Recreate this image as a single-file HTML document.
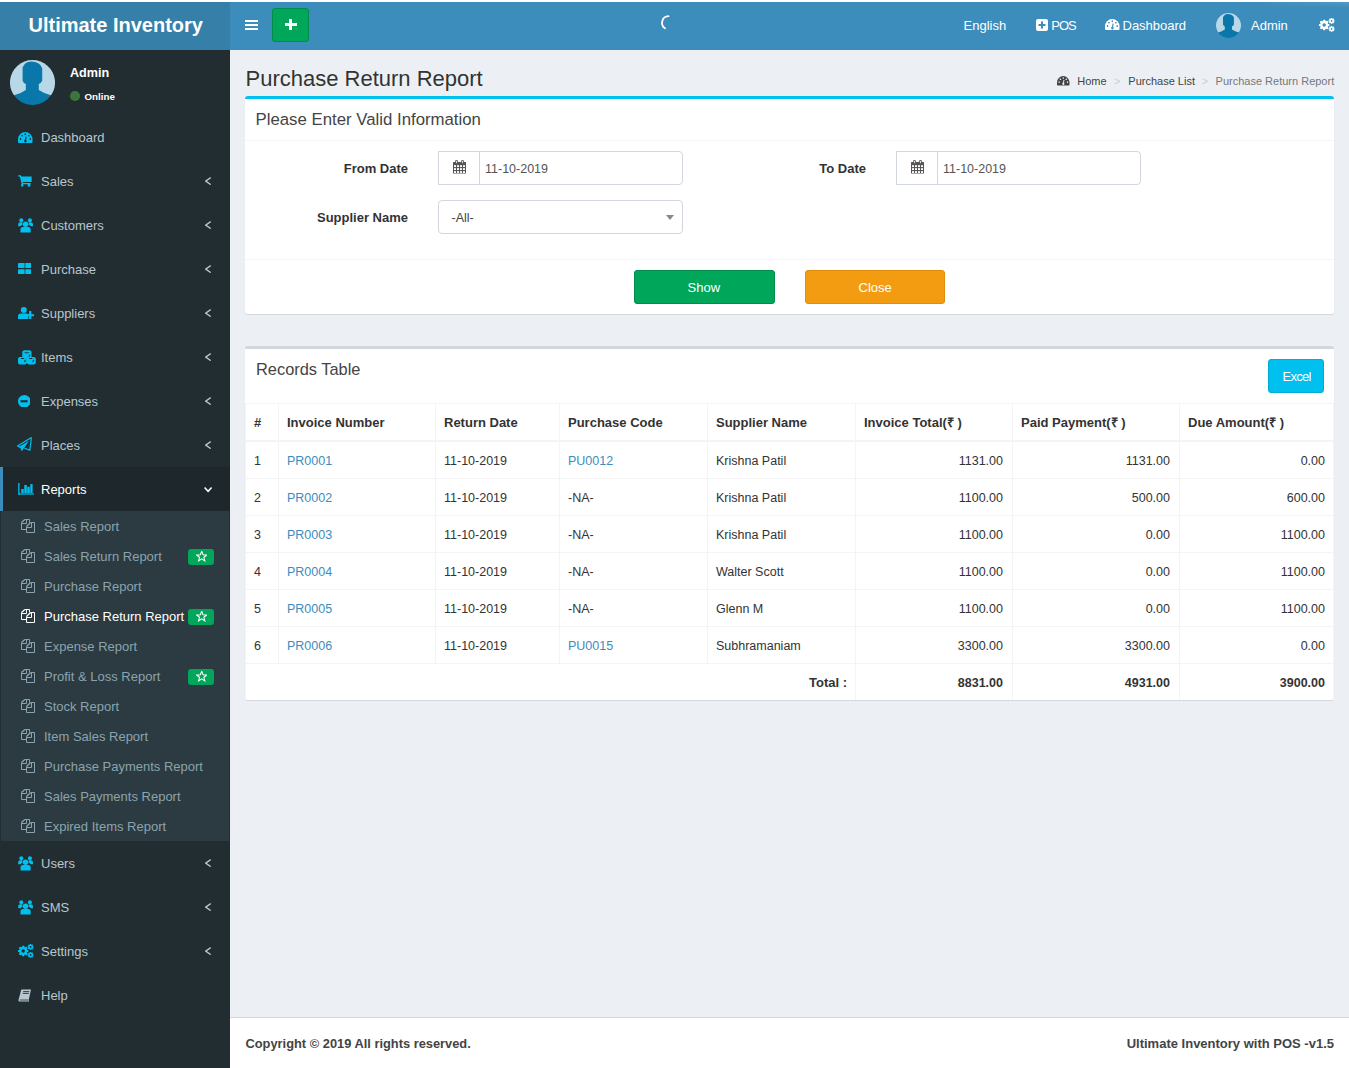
<!DOCTYPE html><html><head><meta charset="utf-8"><style>*{box-sizing:border-box;margin:0;padding:0}
html,body{width:1349px;height:1068px;overflow:hidden;background:#fff;font-family:"Liberation Sans",sans-serif;font-size:13px;color:#333}
.abs{position:absolute}
.t{position:absolute;white-space:nowrap}
.box{position:absolute;background:#fff;border-radius:3px;box-shadow:0 1px 1px rgba(0,0,0,.1)}
</style></head><body>
<div class="abs" style="left:0;top:0;width:1349px;height:2px;background:#fff"></div>
<div class="abs" style="left:0;top:2px;width:230px;height:48px;background:#367fa9"></div>
<div class="abs" style="left:230px;top:2px;width:1119px;height:48px;background:#3c8dbc"></div>
<div class="abs" style="left:1250px;top:2px;width:99px;height:6px;background:linear-gradient(rgba(255,255,255,.12),rgba(255,255,255,0));-webkit-mask-image:linear-gradient(90deg,transparent,#000)"></div>
<span class="t" style="left:28.5px;top:11.07px;font-size:20px;line-height:28px;color:#fff;font-weight:bold;">Ultimate Inventory</span>
<div class="abs" style="left:245px;top:20px;width:13px;height:2px;background:#fff"></div>
<div class="abs" style="left:245px;top:24px;width:13px;height:2px;background:#fff"></div>
<div class="abs" style="left:245px;top:28px;width:13px;height:2px;background:#fff"></div>
<div class="abs" style="left:272px;top:8px;width:37px;height:34px;background:#00a65a;border:1px solid #008d4c;border-radius:3px"></div>
<div class="abs" style="left:285px;top:23px;width:11.6px;height:3px;background:#fff"></div>
<div class="abs" style="left:289.2px;top:19px;width:3.3px;height:11px;background:#fff"></div>
<svg class="abs" style="left:657.3px;top:12.8px" width="20" height="20" viewBox="0 0 20 20"><path d="M11.5 3.2 A6.6 6.6 0 0 0 8 15.3" fill="none" stroke="#fff" stroke-width="1.8" stroke-linecap="round"/></svg>
<span class="t" style="left:963.5px;top:16.50px;font-size:13px;line-height:18px;color:#fff;">English</span>
<svg class="abs" style="left:1036px;top:19px" width="12" height="12" viewBox="0 0 12 12"><rect x="0" y="0" width="12" height="12" rx="2" fill="#fff"/><rect x="2.5" y="5" width="7" height="2" fill="#3c8dbc"/><rect x="5" y="2.5" width="2" height="7" fill="#3c8dbc"/></svg>
<span class="t" style="left:1051.3px;top:16.50px;font-size:13px;line-height:18px;color:#fff;letter-spacing:-1px">POS</span>
<svg class="abs" style="left:1105px;top:18.5px" width="14.5" height="11" viewBox="0 0 14.5 11"><path d="M0.5 11 Q0 10.8 0 9.6 L0 7.3 A7.25 7.25 0 0 1 14.5 7.3 L14.5 9.6 Q14.5 10.8 14 11 Z" fill="#fff"/><ellipse cx="7.3" cy="2.3" rx="0.8" ry="1" fill="#3c8dbc"/><ellipse cx="4" cy="3.7" rx="1" ry="0.8" fill="#3c8dbc"/><ellipse cx="10.8" cy="3.7" rx="1" ry="0.8" fill="#3c8dbc"/><ellipse cx="2.5" cy="7" rx="0.8" ry="1" fill="#3c8dbc"/><ellipse cx="12.2" cy="7" rx="0.8" ry="1" fill="#3c8dbc"/><path d="M7.4 8.6 L8.1 4.6" stroke="#3c8dbc" stroke-width="1.1"/><ellipse cx="7.4" cy="8.9" rx="1.2" ry="1.5" fill="#3c8dbc"/></svg>
<span class="t" style="left:1122.5px;top:16.50px;font-size:13px;line-height:18px;color:#fff;">Dashboard</span>
<svg class="abs" style="left:1216px;top:13px" width="25" height="25" viewBox="0 0 25 25"><path d="M2.21 19.6 A12.5 12.5 0 1 1 22.79 19.6 Z" fill="#b8d8e8"/><path fill="#0a77ab" d="M2.21 19.6 Q6 18.6 8.8 16.6 L8.8 13.4 Q7.6 13 7 11.5 L7 4.2 Q8.3 1 11.6 0.9 Q16.6 0.9 17.9 4.6 L17.9 11.5 Q17.2 13 16 13.4 L16 16.6 Q19 18.6 22.79 19.6 A12.5 12.5 0 0 1 2.21 19.6 Z"/></svg>
<span class="t" style="left:1251px;top:16.50px;font-size:13px;line-height:18px;color:#fff;">Admin</span>
<svg class="abs" style="left:1319px;top:18px" width="16" height="14" viewBox="0 0 16 14"><g fill="#fff"><circle cx="5.2" cy="7" r="3.9"/><rect x="4.1" y="1.8" width="2.2" height="10.4" rx=".4" transform="rotate(0 5.2 7)"/><rect x="4.1" y="1.8" width="2.2" height="10.4" rx=".4" transform="rotate(45 5.2 7)"/><rect x="4.1" y="1.8" width="2.2" height="10.4" rx=".4" transform="rotate(90 5.2 7)"/><rect x="4.1" y="1.8" width="2.2" height="10.4" rx=".4" transform="rotate(135 5.2 7)"/><circle cx="12.6" cy="2.9" r="2.2"/><rect x="11.9" y="-0.050000000000000266" width="1.4" height="5.9" transform="rotate(0 12.6 2.9)"/><rect x="11.9" y="-0.050000000000000266" width="1.4" height="5.9" transform="rotate(45 12.6 2.9)"/><rect x="11.9" y="-0.050000000000000266" width="1.4" height="5.9" transform="rotate(90 12.6 2.9)"/><rect x="11.9" y="-0.050000000000000266" width="1.4" height="5.9" transform="rotate(135 12.6 2.9)"/><circle cx="12.6" cy="10.9" r="2.2"/><rect x="11.9" y="7.95" width="1.4" height="5.9" transform="rotate(0 12.6 10.9)"/><rect x="11.9" y="7.95" width="1.4" height="5.9" transform="rotate(45 12.6 10.9)"/><rect x="11.9" y="7.95" width="1.4" height="5.9" transform="rotate(90 12.6 10.9)"/><rect x="11.9" y="7.95" width="1.4" height="5.9" transform="rotate(135 12.6 10.9)"/></g><circle cx="5.2" cy="7" r="1.7" fill="#3c8dbc"/><circle cx="12.6" cy="2.9" r="0.9" fill="#3c8dbc"/><circle cx="12.6" cy="10.9" r="0.9" fill="#3c8dbc"/></svg>
<div class="abs" style="left:0;top:50px;width:230px;height:1018px;background:#222d32"></div>
<svg class="abs" style="left:10px;top:60px" width="45" height="45" viewBox="0 0 25 25"><path d="M2.21 19.6 A12.5 12.5 0 1 1 22.79 19.6 Z" fill="#b8d8e8"/><path fill="#0a77ab" d="M2.21 19.6 Q6 18.6 8.8 16.6 L8.8 13.4 Q7.6 13 7 11.5 L7 4.2 Q8.3 1 11.6 0.9 Q16.6 0.9 17.9 4.6 L17.9 11.5 Q17.2 13 16 13.4 L16 16.6 Q19 18.6 22.79 19.6 A12.5 12.5 0 0 1 2.21 19.6 Z"/></svg>
<span class="t" style="left:70px;top:63.63px;font-size:12.6px;line-height:18px;color:#fff;font-weight:bold;">Admin</span>
<div class="abs" style="left:70px;top:91.2px;width:9.5px;height:9.5px;border-radius:50%;background:#3c763d"></div>
<span class="t" style="left:84.5px;top:89.62px;font-size:9.75px;line-height:14px;color:#fff;font-weight:bold;">Online</span>
<span class="t" style="left:41px;top:128.70px;font-size:13px;line-height:18px;color:#b8c7ce;">Dashboard</span>
<svg class="abs" style="left:18px;top:132px" width="14.5" height="11" viewBox="0 0 14.5 11"><path d="M0.5 11 Q0 10.8 0 9.6 L0 7.3 A7.25 7.25 0 0 1 14.5 7.3 L14.5 9.6 Q14.5 10.8 14 11 Z" fill="#00c0ef"/><ellipse cx="7.3" cy="2.3" rx="0.8" ry="1" fill="#222d32"/><ellipse cx="4" cy="3.7" rx="1" ry="0.8" fill="#222d32"/><ellipse cx="10.8" cy="3.7" rx="1" ry="0.8" fill="#222d32"/><ellipse cx="2.5" cy="7" rx="0.8" ry="1" fill="#222d32"/><ellipse cx="12.2" cy="7" rx="0.8" ry="1" fill="#222d32"/><path d="M7.4 8.6 L8.1 4.6" stroke="#222d32" stroke-width="1.1"/><ellipse cx="7.4" cy="8.9" rx="1.2" ry="1.5" fill="#222d32"/></svg>
<span class="t" style="left:41px;top:172.70px;font-size:13px;line-height:18px;color:#b8c7ce;">Sales</span>
<svg class="abs" style="left:204.5px;top:177px" width="6.5" height="8.2" viewBox="0 0 6.5 8.2"><path d="M5.8 0.6 L0.7 4.1 L5.8 7.6" fill="none" stroke="#b8c7ce" stroke-width="1.4"/></svg>
<svg class="abs" style="left:17.5px;top:175.3px" width="14" height="12" viewBox="0 0 14 12"><path d="M0.2 0.9 H2.4 L4.3 8.6 H12.8" fill="none" stroke="#00c0ef" stroke-width="1.4"/><path d="M2.7 1.6 H13.6 V6.9 H3.9 Z" fill="#00c0ef"/><rect x="3.2" y="9" width="2" height="2.6" fill="#00c0ef"/><rect x="9.8" y="9" width="2.5" height="2.6" fill="#00c0ef"/></svg>
<span class="t" style="left:41px;top:216.70px;font-size:13px;line-height:18px;color:#b8c7ce;">Customers</span>
<svg class="abs" style="left:204.5px;top:221px" width="6.5" height="8.2" viewBox="0 0 6.5 8.2"><path d="M5.8 0.6 L0.7 4.1 L5.8 7.6" fill="none" stroke="#b8c7ce" stroke-width="1.4"/></svg>
<svg class="abs" style="left:17.5px;top:217.5px" width="15.2" height="15" viewBox="0 0 15.2 15"><g fill="#00c0ef"><circle cx="7.6" cy="6.3" r="2.8"/><path d="M2.5 14.5 V11.6 Q2.5 9 5 9 H10.2 Q12.7 9 12.7 11.6 V14.5 Z"/><circle cx="3.3" cy="2.2" r="2"/><circle cx="11.9" cy="2.2" r="2"/><path d="M0.2 8.2 V6.2 Q0.2 4.2 2.2 4.2 H4.4 Q4.1 5.2 4.6 6.5 Q3 7.2 2.6 8.2 Z"/><path d="M15 8.2 V6.2 Q15 4.2 13 4.2 H10.8 Q11.1 5.2 10.6 6.5 Q12.2 7.2 12.6 8.2 Z"/></g></svg>
<span class="t" style="left:41px;top:260.70px;font-size:13px;line-height:18px;color:#b8c7ce;">Purchase</span>
<svg class="abs" style="left:204.5px;top:265px" width="6.5" height="8.2" viewBox="0 0 6.5 8.2"><path d="M5.8 0.6 L0.7 4.1 L5.8 7.6" fill="none" stroke="#b8c7ce" stroke-width="1.4"/></svg>
<svg class="abs" style="left:17.6px;top:262.8px" width="13.7" height="11.5" viewBox="0 0 13.7 11.5"><g fill="#00c0ef"><rect x="0" y="0" width="6.6" height="5.1" rx=".4"/><rect x="7.3" y="0" width="6.4" height="5.1" rx=".4"/><rect x="0" y="6.2" width="6.6" height="5.2" rx=".4"/><rect x="7.3" y="6.2" width="6.4" height="5.2" rx=".4"/></g></svg>
<span class="t" style="left:41px;top:304.70px;font-size:13px;line-height:18px;color:#b8c7ce;">Suppliers</span>
<svg class="abs" style="left:204.5px;top:309px" width="6.5" height="8.2" viewBox="0 0 6.5 8.2"><path d="M5.8 0.6 L0.7 4.1 L5.8 7.6" fill="none" stroke="#b8c7ce" stroke-width="1.4"/></svg>
<svg class="abs" style="left:17.5px;top:307px" width="16.5" height="12" viewBox="0 0 16.5 12"><g fill="#00c0ef"><circle cx="5.8" cy="3" r="3"/><path d="M0 12 V9.5 Q0 6.5 3 6.5 H8.5 Q9.6 6.5 10.4 7 V12 Z"/><rect x="7.8" y="7.2" width="8.7" height="2"/><rect x="11.1" y="4" width="2.2" height="8"/></g></svg>
<span class="t" style="left:41px;top:348.70px;font-size:13px;line-height:18px;color:#b8c7ce;">Items</span>
<svg class="abs" style="left:204.5px;top:353px" width="6.5" height="8.2" viewBox="0 0 6.5 8.2"><path d="M5.8 0.6 L0.7 4.1 L5.8 7.6" fill="none" stroke="#b8c7ce" stroke-width="1.4"/></svg>
<svg class="abs" style="left:17.5px;top:350px" width="18" height="15" viewBox="0 0 18 15"><g fill="#00c0ef"><path d="M4.3 1.4 L5.9 0.3 H11.9 L13.5 1.4 V7.4 L11.9 8.4 H5.9 L4.3 7.4 Z"/><path d="M0 8.2 L1.6 7 H7.3 L8.9 8.2 V13.3 L7.3 14.6 H1.6 L0 13.3 Z"/><path d="M8.9 8.2 L10.5 7 H16.2 L17.8 8.2 V13.3 L16.2 14.6 H10.5 L8.9 13.3 Z"/></g><g fill="#222d32"><path d="M5.7 2.8 Q8.9 1.8 12 2.8 Q8.9 3.8 5.7 2.8 Z"/><path d="M2.6 7.9 H6.5 L5.7 9.1 H3.4 Z"/><path d="M10.9 7.9 H14.8 L14 9.1 H11.7 Z"/></g><g stroke="#222d32" stroke-width="1.1" stroke-linecap="round"><path d="M11.9 5.1 L11.1 6.3"/><path d="M7.3 10.3 L6.6 11.7"/><path d="M15.6 10.3 L14.9 11.7"/></g></svg>
<span class="t" style="left:41px;top:392.70px;font-size:13px;line-height:18px;color:#b8c7ce;">Expenses</span>
<svg class="abs" style="left:204.5px;top:397px" width="6.5" height="8.2" viewBox="0 0 6.5 8.2"><path d="M5.8 0.6 L0.7 4.1 L5.8 7.6" fill="none" stroke="#b8c7ce" stroke-width="1.4"/></svg>
<svg class="abs" style="left:17.7px;top:394.9px" width="12.6" height="12.6" viewBox="0 0 12.6 12.6"><circle cx="6.3" cy="6.3" r="6.3" fill="#00c0ef"/><rect x="2.5" y="5.2" width="7.1" height="2.1" fill="#222d32"/></svg>
<span class="t" style="left:41px;top:436.70px;font-size:13px;line-height:18px;color:#b8c7ce;">Places</span>
<svg class="abs" style="left:204.5px;top:441px" width="6.5" height="8.2" viewBox="0 0 6.5 8.2"><path d="M5.8 0.6 L0.7 4.1 L5.8 7.6" fill="none" stroke="#b8c7ce" stroke-width="1.4"/></svg>
<svg class="abs" style="left:17.3px;top:437.4px" width="15" height="15" viewBox="0 0 15 15"><path d="M14.4 0.5 L0.5 9 L3.3 10.4 M14.4 0.5 L12.9 13.1 L7.4 11.3" fill="none" stroke="#00c0ef" stroke-width="1.2" stroke-linejoin="round"/><path d="M11.9 3.9 L2.6 9.6 L4.8 14.3 L7 11.1 Z" fill="#00c0ef"/></svg>
<div class="abs" style="left:0;top:467px;width:230px;height:44px;background:#1e282c"></div>
<div class="abs" style="left:0;top:467px;width:3px;height:44px;background:#3c8dbc"></div>
<span class="t" style="left:41px;top:480.70px;font-size:13px;line-height:18px;color:#fff;">Reports</span>
<svg class="abs" style="left:204px;top:487px" width="8.5" height="5.5" viewBox="0 0 8.5 5.5"><path d="M0.6 0.6 L4.1 4.3 L7.6 0.6" fill="none" stroke="#fff" stroke-width="1.5"/></svg>
<svg class="abs" style="left:17.5px;top:483px" width="16.5" height="11.7" viewBox="0 0 16.5 11.7"><g fill="#00c0ef"><rect x="0.2" y="0" width="1.3" height="11.6"/><rect x="0.2" y="10.4" width="16.3" height="1.2"/><rect x="3.3" y="6" width="2.4" height="4"/><rect x="6.3" y="2" width="2.5" height="8"/><rect x="9.3" y="3.8" width="2.4" height="6.2"/><rect x="12.3" y="1.1" width="2.3" height="8.9"/></g></svg>
<div class="abs" style="left:1px;top:511px;width:228px;height:330px;background:#2c3b41"></div>
<span class="t" style="left:44px;top:517.50px;font-size:13px;line-height:18px;color:#8aa4af;">Sales Report</span>
<svg class="abs" style="left:21px;top:519px" width="15" height="15" viewBox="0 0 15 15"><g fill="none" stroke="#8aa4af" stroke-width="1"><path d="M3.8 0.5 H8.5 V3.5 M5.5 10.5 H0.5 V3.5 M5.5 0.5 V4.5 H0.5"/><path d="M9.5 3.5 H13.5 V13.5 H5.5 V7.5 M10.5 3.5 V8.5 H5.5"/></g><path d="M0.5 3.6 L3.9 0.5 M5.5 7.6 L9.6 3.5" stroke="#8aa4af" stroke-width="1.35"/></svg>
<span class="t" style="left:44px;top:547.50px;font-size:13px;line-height:18px;color:#8aa4af;">Sales Return Report</span>
<svg class="abs" style="left:21px;top:549px" width="15" height="15" viewBox="0 0 15 15"><g fill="none" stroke="#8aa4af" stroke-width="1"><path d="M3.8 0.5 H8.5 V3.5 M5.5 10.5 H0.5 V3.5 M5.5 0.5 V4.5 H0.5"/><path d="M9.5 3.5 H13.5 V13.5 H5.5 V7.5 M10.5 3.5 V8.5 H5.5"/></g><path d="M0.5 3.6 L3.9 0.5 M5.5 7.6 L9.6 3.5" stroke="#8aa4af" stroke-width="1.35"/></svg>
<div class="abs" style="left:188px;top:549px;width:26px;height:16px;background:#00a65a;border-radius:3px"></div>
<svg class="abs" style="left:195.6px;top:551.1px" width="11.4" height="11" viewBox="0 0 11.4 11"><path d="M5.70 0.25 L7.05 3.74 L10.79 3.95 L7.89 6.31 L8.84 9.93 L5.70 7.90 L2.56 9.93 L3.51 6.31 L0.61 3.95 L4.35 3.74 Z" fill="none" stroke="#fff" stroke-width="1.05" stroke-linejoin="miter"/></svg>
<span class="t" style="left:44px;top:577.50px;font-size:13px;line-height:18px;color:#8aa4af;">Purchase Report</span>
<svg class="abs" style="left:21px;top:579px" width="15" height="15" viewBox="0 0 15 15"><g fill="none" stroke="#8aa4af" stroke-width="1"><path d="M3.8 0.5 H8.5 V3.5 M5.5 10.5 H0.5 V3.5 M5.5 0.5 V4.5 H0.5"/><path d="M9.5 3.5 H13.5 V13.5 H5.5 V7.5 M10.5 3.5 V8.5 H5.5"/></g><path d="M0.5 3.6 L3.9 0.5 M5.5 7.6 L9.6 3.5" stroke="#8aa4af" stroke-width="1.35"/></svg>
<span class="t" style="left:44px;top:607.50px;font-size:13px;line-height:18px;color:#fff;">Purchase Return Report</span>
<svg class="abs" style="left:21px;top:609px" width="15" height="15" viewBox="0 0 15 15"><g fill="none" stroke="#fff" stroke-width="1"><path d="M3.8 0.5 H8.5 V3.5 M5.5 10.5 H0.5 V3.5 M5.5 0.5 V4.5 H0.5"/><path d="M9.5 3.5 H13.5 V13.5 H5.5 V7.5 M10.5 3.5 V8.5 H5.5"/></g><path d="M0.5 3.6 L3.9 0.5 M5.5 7.6 L9.6 3.5" stroke="#fff" stroke-width="1.35"/></svg>
<div class="abs" style="left:188px;top:609px;width:26px;height:16px;background:#00a65a;border-radius:3px"></div>
<svg class="abs" style="left:195.6px;top:611.1px" width="11.4" height="11" viewBox="0 0 11.4 11"><path d="M5.70 0.25 L7.05 3.74 L10.79 3.95 L7.89 6.31 L8.84 9.93 L5.70 7.90 L2.56 9.93 L3.51 6.31 L0.61 3.95 L4.35 3.74 Z" fill="none" stroke="#fff" stroke-width="1.05" stroke-linejoin="miter"/></svg>
<span class="t" style="left:44px;top:637.50px;font-size:13px;line-height:18px;color:#8aa4af;">Expense Report</span>
<svg class="abs" style="left:21px;top:639px" width="15" height="15" viewBox="0 0 15 15"><g fill="none" stroke="#8aa4af" stroke-width="1"><path d="M3.8 0.5 H8.5 V3.5 M5.5 10.5 H0.5 V3.5 M5.5 0.5 V4.5 H0.5"/><path d="M9.5 3.5 H13.5 V13.5 H5.5 V7.5 M10.5 3.5 V8.5 H5.5"/></g><path d="M0.5 3.6 L3.9 0.5 M5.5 7.6 L9.6 3.5" stroke="#8aa4af" stroke-width="1.35"/></svg>
<span class="t" style="left:44px;top:667.50px;font-size:13px;line-height:18px;color:#8aa4af;">Profit &amp; Loss Report</span>
<svg class="abs" style="left:21px;top:669px" width="15" height="15" viewBox="0 0 15 15"><g fill="none" stroke="#8aa4af" stroke-width="1"><path d="M3.8 0.5 H8.5 V3.5 M5.5 10.5 H0.5 V3.5 M5.5 0.5 V4.5 H0.5"/><path d="M9.5 3.5 H13.5 V13.5 H5.5 V7.5 M10.5 3.5 V8.5 H5.5"/></g><path d="M0.5 3.6 L3.9 0.5 M5.5 7.6 L9.6 3.5" stroke="#8aa4af" stroke-width="1.35"/></svg>
<div class="abs" style="left:188px;top:669px;width:26px;height:16px;background:#00a65a;border-radius:3px"></div>
<svg class="abs" style="left:195.6px;top:671.1px" width="11.4" height="11" viewBox="0 0 11.4 11"><path d="M5.70 0.25 L7.05 3.74 L10.79 3.95 L7.89 6.31 L8.84 9.93 L5.70 7.90 L2.56 9.93 L3.51 6.31 L0.61 3.95 L4.35 3.74 Z" fill="none" stroke="#fff" stroke-width="1.05" stroke-linejoin="miter"/></svg>
<span class="t" style="left:44px;top:697.50px;font-size:13px;line-height:18px;color:#8aa4af;">Stock Report</span>
<svg class="abs" style="left:21px;top:699px" width="15" height="15" viewBox="0 0 15 15"><g fill="none" stroke="#8aa4af" stroke-width="1"><path d="M3.8 0.5 H8.5 V3.5 M5.5 10.5 H0.5 V3.5 M5.5 0.5 V4.5 H0.5"/><path d="M9.5 3.5 H13.5 V13.5 H5.5 V7.5 M10.5 3.5 V8.5 H5.5"/></g><path d="M0.5 3.6 L3.9 0.5 M5.5 7.6 L9.6 3.5" stroke="#8aa4af" stroke-width="1.35"/></svg>
<span class="t" style="left:44px;top:727.50px;font-size:13px;line-height:18px;color:#8aa4af;">Item Sales Report</span>
<svg class="abs" style="left:21px;top:729px" width="15" height="15" viewBox="0 0 15 15"><g fill="none" stroke="#8aa4af" stroke-width="1"><path d="M3.8 0.5 H8.5 V3.5 M5.5 10.5 H0.5 V3.5 M5.5 0.5 V4.5 H0.5"/><path d="M9.5 3.5 H13.5 V13.5 H5.5 V7.5 M10.5 3.5 V8.5 H5.5"/></g><path d="M0.5 3.6 L3.9 0.5 M5.5 7.6 L9.6 3.5" stroke="#8aa4af" stroke-width="1.35"/></svg>
<span class="t" style="left:44px;top:757.50px;font-size:13px;line-height:18px;color:#8aa4af;">Purchase Payments Report</span>
<svg class="abs" style="left:21px;top:759px" width="15" height="15" viewBox="0 0 15 15"><g fill="none" stroke="#8aa4af" stroke-width="1"><path d="M3.8 0.5 H8.5 V3.5 M5.5 10.5 H0.5 V3.5 M5.5 0.5 V4.5 H0.5"/><path d="M9.5 3.5 H13.5 V13.5 H5.5 V7.5 M10.5 3.5 V8.5 H5.5"/></g><path d="M0.5 3.6 L3.9 0.5 M5.5 7.6 L9.6 3.5" stroke="#8aa4af" stroke-width="1.35"/></svg>
<span class="t" style="left:44px;top:787.50px;font-size:13px;line-height:18px;color:#8aa4af;">Sales Payments Report</span>
<svg class="abs" style="left:21px;top:789px" width="15" height="15" viewBox="0 0 15 15"><g fill="none" stroke="#8aa4af" stroke-width="1"><path d="M3.8 0.5 H8.5 V3.5 M5.5 10.5 H0.5 V3.5 M5.5 0.5 V4.5 H0.5"/><path d="M9.5 3.5 H13.5 V13.5 H5.5 V7.5 M10.5 3.5 V8.5 H5.5"/></g><path d="M0.5 3.6 L3.9 0.5 M5.5 7.6 L9.6 3.5" stroke="#8aa4af" stroke-width="1.35"/></svg>
<span class="t" style="left:44px;top:817.50px;font-size:13px;line-height:18px;color:#8aa4af;">Expired Items Report</span>
<svg class="abs" style="left:21px;top:819px" width="15" height="15" viewBox="0 0 15 15"><g fill="none" stroke="#8aa4af" stroke-width="1"><path d="M3.8 0.5 H8.5 V3.5 M5.5 10.5 H0.5 V3.5 M5.5 0.5 V4.5 H0.5"/><path d="M9.5 3.5 H13.5 V13.5 H5.5 V7.5 M10.5 3.5 V8.5 H5.5"/></g><path d="M0.5 3.6 L3.9 0.5 M5.5 7.6 L9.6 3.5" stroke="#8aa4af" stroke-width="1.35"/></svg>
<span class="t" style="left:41px;top:854.70px;font-size:13px;line-height:18px;color:#b8c7ce;">Users</span>
<svg class="abs" style="left:204.5px;top:859px" width="6.5" height="8.2" viewBox="0 0 6.5 8.2"><path d="M5.8 0.6 L0.7 4.1 L5.8 7.6" fill="none" stroke="#b8c7ce" stroke-width="1.4"/></svg>
<svg class="abs" style="left:17.5px;top:855.5px" width="15.2" height="15" viewBox="0 0 15.2 15"><g fill="#00c0ef"><circle cx="7.6" cy="6.3" r="2.8"/><path d="M2.5 14.5 V11.6 Q2.5 9 5 9 H10.2 Q12.7 9 12.7 11.6 V14.5 Z"/><circle cx="3.3" cy="2.2" r="2"/><circle cx="11.9" cy="2.2" r="2"/><path d="M0.2 8.2 V6.2 Q0.2 4.2 2.2 4.2 H4.4 Q4.1 5.2 4.6 6.5 Q3 7.2 2.6 8.2 Z"/><path d="M15 8.2 V6.2 Q15 4.2 13 4.2 H10.8 Q11.1 5.2 10.6 6.5 Q12.2 7.2 12.6 8.2 Z"/></g></svg>
<span class="t" style="left:41px;top:898.70px;font-size:13px;line-height:18px;color:#b8c7ce;">SMS</span>
<svg class="abs" style="left:204.5px;top:903px" width="6.5" height="8.2" viewBox="0 0 6.5 8.2"><path d="M5.8 0.6 L0.7 4.1 L5.8 7.6" fill="none" stroke="#b8c7ce" stroke-width="1.4"/></svg>
<svg class="abs" style="left:17.5px;top:899.5px" width="15.2" height="15" viewBox="0 0 15.2 15"><g fill="#00c0ef"><circle cx="7.6" cy="6.3" r="2.8"/><path d="M2.5 14.5 V11.6 Q2.5 9 5 9 H10.2 Q12.7 9 12.7 11.6 V14.5 Z"/><circle cx="3.3" cy="2.2" r="2"/><circle cx="11.9" cy="2.2" r="2"/><path d="M0.2 8.2 V6.2 Q0.2 4.2 2.2 4.2 H4.4 Q4.1 5.2 4.6 6.5 Q3 7.2 2.6 8.2 Z"/><path d="M15 8.2 V6.2 Q15 4.2 13 4.2 H10.8 Q11.1 5.2 10.6 6.5 Q12.2 7.2 12.6 8.2 Z"/></g></svg>
<span class="t" style="left:41px;top:942.70px;font-size:13px;line-height:18px;color:#b8c7ce;">Settings</span>
<svg class="abs" style="left:204.5px;top:947px" width="6.5" height="8.2" viewBox="0 0 6.5 8.2"><path d="M5.8 0.6 L0.7 4.1 L5.8 7.6" fill="none" stroke="#b8c7ce" stroke-width="1.4"/></svg>
<svg class="abs" style="left:17.8px;top:943.8px" width="16" height="14" viewBox="0 0 16 14"><g fill="#00c0ef"><circle cx="5.2" cy="7" r="3.9"/><rect x="4.1" y="1.8" width="2.2" height="10.4" rx=".4" transform="rotate(0 5.2 7)"/><rect x="4.1" y="1.8" width="2.2" height="10.4" rx=".4" transform="rotate(45 5.2 7)"/><rect x="4.1" y="1.8" width="2.2" height="10.4" rx=".4" transform="rotate(90 5.2 7)"/><rect x="4.1" y="1.8" width="2.2" height="10.4" rx=".4" transform="rotate(135 5.2 7)"/><circle cx="12.6" cy="2.9" r="2.2"/><rect x="11.9" y="-0.050000000000000266" width="1.4" height="5.9" transform="rotate(0 12.6 2.9)"/><rect x="11.9" y="-0.050000000000000266" width="1.4" height="5.9" transform="rotate(45 12.6 2.9)"/><rect x="11.9" y="-0.050000000000000266" width="1.4" height="5.9" transform="rotate(90 12.6 2.9)"/><rect x="11.9" y="-0.050000000000000266" width="1.4" height="5.9" transform="rotate(135 12.6 2.9)"/><circle cx="12.6" cy="10.9" r="2.2"/><rect x="11.9" y="7.95" width="1.4" height="5.9" transform="rotate(0 12.6 10.9)"/><rect x="11.9" y="7.95" width="1.4" height="5.9" transform="rotate(45 12.6 10.9)"/><rect x="11.9" y="7.95" width="1.4" height="5.9" transform="rotate(90 12.6 10.9)"/><rect x="11.9" y="7.95" width="1.4" height="5.9" transform="rotate(135 12.6 10.9)"/></g><circle cx="5.2" cy="7" r="1.7" fill="#222d32"/><circle cx="12.6" cy="2.9" r="0.9" fill="#222d32"/><circle cx="12.6" cy="10.9" r="0.9" fill="#222d32"/></svg>
<span class="t" style="left:41px;top:986.70px;font-size:13px;line-height:18px;color:#b8c7ce;">Help</span>
<svg class="abs" style="left:17.5px;top:988.5px" width="14" height="13" viewBox="0 0 14 13"><path d="M3.3 0.4 H13 L10.8 10.6 Q10.6 11.4 11.2 12.4 H1.6 Q0.1 12.4 0.5 10.9 Z" fill="#b8c7ce"/><path d="M5.2 2.6 H11.2 M4.8 4.4 H10.8" stroke="#222d32" stroke-width=".9"/><path d="M1.8 11 H10.4" stroke="#222d32" stroke-width=".8"/></svg>
<div class="abs" style="left:230px;top:50px;width:1119px;height:967px;background:#ecf0f5"></div>
<span class="t" style="left:245.5px;top:63.38px;font-size:22px;line-height:31px;color:#333;">Purchase Return Report</span>
<svg class="abs" style="left:1057px;top:76.3px" width="12.5" height="9.5" viewBox="0 0 14.5 11"><path d="M0.5 11 Q0 10.8 0 9.6 L0 7.3 A7.25 7.25 0 0 1 14.5 7.3 L14.5 9.6 Q14.5 10.8 14 11 Z" fill="#444"/><ellipse cx="7.3" cy="2.3" rx="0.8" ry="1" fill="#ecf0f5"/><ellipse cx="4" cy="3.7" rx="1" ry="0.8" fill="#ecf0f5"/><ellipse cx="10.8" cy="3.7" rx="1" ry="0.8" fill="#ecf0f5"/><ellipse cx="2.5" cy="7" rx="0.8" ry="1" fill="#ecf0f5"/><ellipse cx="12.2" cy="7" rx="0.8" ry="1" fill="#ecf0f5"/><path d="M7.4 8.6 L8.1 4.6" stroke="#ecf0f5" stroke-width="1.1"/><ellipse cx="7.4" cy="8.9" rx="1.2" ry="1.5" fill="#ecf0f5"/></svg>
<span class="t" style="left:1077.3px;top:73.99px;font-size:11px;line-height:15px;color:#444;">Home</span>
<span class="t" style="left:1114px;top:73.99px;font-size:11px;line-height:15px;color:#ccc;">&gt;</span>
<span class="t" style="left:1128.3px;top:73.99px;font-size:11px;line-height:15px;color:#444;">Purchase List</span>
<span class="t" style="left:1201.8px;top:73.99px;font-size:11px;line-height:15px;color:#ccc;">&gt;</span>
<span class="t" style="left:1215.6px;top:73.99px;font-size:11px;line-height:15px;color:#777;">Purchase Return Report</span>
<div class="box" style="left:245px;top:96px;width:1089px;height:218px;border-top:3px solid #00c0ef"></div>
<span class="t" style="left:255.5px;top:107.78px;font-size:16.8px;line-height:24px;color:#444;">Please Enter Valid Information</span>
<div class="abs" style="left:245px;top:140px;width:1089px;height:1px;background:#f4f4f4"></div>
<span class="t" style="right:941px;top:159.50px;font-size:13px;line-height:18px;font-weight:bold;">From Date</span>
<span class="t" style="right:483px;top:159.50px;font-size:13px;line-height:18px;font-weight:bold;">To Date</span>
<span class="t" style="right:941px;top:208.50px;font-size:13px;line-height:18px;font-weight:bold;">Supplier Name</span>
<div class="abs" style="left:438px;top:151px;width:245px;height:34px;border:1px solid #d2d6de;border-radius:0 4px 4px 0"></div>
<div class="abs" style="left:479px;top:151px;width:1px;height:34px;background:#d2d6de"></div>
<svg class="abs" style="left:453px;top:160px" width="13" height="14" viewBox="0 0 13 14"><rect x="0" y="2" width="13" height="11.6" rx=".5" fill="#555"/><g fill="#fff"><rect x="1" y="5.2" width="2" height="1.85"/><rect x="1" y="8.15" width="2" height="1.85"/><rect x="1" y="11.100000000000001" width="2" height="1.85"/><rect x="4" y="5.2" width="2" height="1.85"/><rect x="4" y="8.15" width="2" height="1.85"/><rect x="4" y="11.100000000000001" width="2" height="1.85"/><rect x="7" y="5.2" width="2" height="1.85"/><rect x="7" y="8.15" width="2" height="1.85"/><rect x="7" y="11.100000000000001" width="2" height="1.85"/><rect x="10" y="5.2" width="2" height="1.85"/><rect x="10" y="8.15" width="2" height="1.85"/><rect x="10" y="11.100000000000001" width="2" height="1.85"/></g><rect x="2.2" y="0" width="2.6" height="3.9" rx=".9" fill="#555"/><rect x="8.2" y="0" width="2.6" height="3.9" rx=".9" fill="#555"/><rect x="3.1" y="0.8" width="0.8" height="2.4" fill="#fff"/><rect x="9.1" y="0.8" width="0.8" height="2.4" fill="#fff"/></svg>
<span class="t" style="left:485px;top:159.67px;font-size:12.5px;line-height:18px;color:#555;">11-10-2019</span>
<div class="abs" style="left:896px;top:151px;width:245px;height:34px;border:1px solid #d2d6de;border-radius:0 4px 4px 0"></div>
<div class="abs" style="left:937px;top:151px;width:1px;height:34px;background:#d2d6de"></div>
<svg class="abs" style="left:911px;top:160px" width="13" height="14" viewBox="0 0 13 14"><rect x="0" y="2" width="13" height="11.6" rx=".5" fill="#555"/><g fill="#fff"><rect x="1" y="5.2" width="2" height="1.85"/><rect x="1" y="8.15" width="2" height="1.85"/><rect x="1" y="11.100000000000001" width="2" height="1.85"/><rect x="4" y="5.2" width="2" height="1.85"/><rect x="4" y="8.15" width="2" height="1.85"/><rect x="4" y="11.100000000000001" width="2" height="1.85"/><rect x="7" y="5.2" width="2" height="1.85"/><rect x="7" y="8.15" width="2" height="1.85"/><rect x="7" y="11.100000000000001" width="2" height="1.85"/><rect x="10" y="5.2" width="2" height="1.85"/><rect x="10" y="8.15" width="2" height="1.85"/><rect x="10" y="11.100000000000001" width="2" height="1.85"/></g><rect x="2.2" y="0" width="2.6" height="3.9" rx=".9" fill="#555"/><rect x="8.2" y="0" width="2.6" height="3.9" rx=".9" fill="#555"/><rect x="3.1" y="0.8" width="0.8" height="2.4" fill="#fff"/><rect x="9.1" y="0.8" width="0.8" height="2.4" fill="#fff"/></svg>
<span class="t" style="left:943px;top:159.67px;font-size:12.5px;line-height:18px;color:#555;">11-10-2019</span>
<div class="abs" style="left:438px;top:200px;width:245px;height:34px;border:1px solid #d2d6de;border-radius:4px"></div>
<span class="t" style="left:451.5px;top:208.67px;font-size:12.5px;line-height:18px;color:#444;">-All-</span>
<svg class="abs" style="left:666px;top:215px" width="8" height="5" viewBox="0 0 8 5"><path d="M0 0 H8 L4 5 Z" fill="#888"/></svg>
<div class="abs" style="left:245px;top:259px;width:1089px;height:1px;background:#f4f4f4"></div>
<div class="abs" style="left:634px;top:270px;width:141px;height:34px;background:#00a65a;border:1px solid #008d4c;border-radius:3px"></div>
<div class="abs" style="left:805px;top:270px;width:140px;height:34px;background:#f39c12;border:1px solid #e08e0b;border-radius:3px"></div>
<span class="t" style="left:687.5px;top:278.80px;font-size:13px;line-height:18px;color:#fff;">Show</span>
<span class="t" style="left:858.5px;top:278.80px;font-size:13px;line-height:18px;color:#fff;">Close</span>
<div class="box" style="left:245px;top:346px;width:1089px;height:354px;border-top:3px solid #d2d6de"></div>
<span class="t" style="left:256px;top:358.22px;font-size:16.4px;line-height:23px;color:#444;">Records Table</span>
<div class="abs" style="left:1268px;top:359px;width:56px;height:34px;background:#00c0ef;border:1px solid #00acd6;border-radius:3px"></div>
<span class="t" style="left:1282.5px;top:367.50px;font-size:13px;line-height:18px;color:#fff;letter-spacing:-0.7px">Excel</span>
<div class="abs" style="left:245px;top:403px;width:1089px;height:1px;background:#f4f4f4"></div>
<div class="abs" style="left:245px;top:440px;width:1089px;height:2px;background:#f4f4f4"></div>
<div class="abs" style="left:245px;top:478px;width:1089px;height:1px;background:#f4f4f4"></div>
<div class="abs" style="left:245px;top:515px;width:1089px;height:1px;background:#f4f4f4"></div>
<div class="abs" style="left:245px;top:552px;width:1089px;height:1px;background:#f4f4f4"></div>
<div class="abs" style="left:245px;top:589px;width:1089px;height:1px;background:#f4f4f4"></div>
<div class="abs" style="left:245px;top:626px;width:1089px;height:1px;background:#f4f4f4"></div>
<div class="abs" style="left:245px;top:663px;width:1089px;height:1px;background:#f4f4f4"></div>
<div class="abs" style="left:245px;top:403px;width:1px;height:297px;background:#f4f4f4"></div>
<div class="abs" style="left:278px;top:403px;width:1px;height:260px;background:#f4f4f4"></div>
<div class="abs" style="left:435px;top:403px;width:1px;height:260px;background:#f4f4f4"></div>
<div class="abs" style="left:559px;top:403px;width:1px;height:260px;background:#f4f4f4"></div>
<div class="abs" style="left:707px;top:403px;width:1px;height:260px;background:#f4f4f4"></div>
<div class="abs" style="left:855px;top:403px;width:1px;height:297px;background:#f4f4f4"></div>
<div class="abs" style="left:1012px;top:403px;width:1px;height:297px;background:#f4f4f4"></div>
<div class="abs" style="left:1179px;top:403px;width:1px;height:297px;background:#f4f4f4"></div>
<div class="abs" style="left:1333px;top:403px;width:1px;height:297px;background:#f4f4f4"></div>
<span class="t" style="left:254px;top:413.50px;font-size:13px;line-height:18px;font-weight:bold;">#</span>
<span class="t" style="left:287px;top:413.50px;font-size:13px;line-height:18px;font-weight:bold;">Invoice Number</span>
<span class="t" style="left:444px;top:413.50px;font-size:13px;line-height:18px;font-weight:bold;">Return Date</span>
<span class="t" style="left:568px;top:413.50px;font-size:13px;line-height:18px;font-weight:bold;">Purchase Code</span>
<span class="t" style="left:716px;top:413.50px;font-size:13px;line-height:18px;font-weight:bold;">Supplier Name</span>
<span class="t" style="left:864px;top:413.50px;font-size:13px;line-height:18px;font-weight:bold;">Invoice Total(&#8377; )</span>
<span class="t" style="left:1021px;top:413.50px;font-size:13px;line-height:18px;font-weight:bold;">Paid Payment(&#8377; )</span>
<span class="t" style="left:1188px;top:413.50px;font-size:13px;line-height:18px;font-weight:bold;">Due Amount(&#8377; )</span>
<span class="t" style="left:254px;top:451.67px;font-size:12.5px;line-height:18px;color:#333;">1</span>
<span class="t" style="left:287px;top:451.67px;font-size:12.5px;line-height:18px;color:#3c8dbc;">PR0001</span>
<span class="t" style="left:444px;top:451.67px;font-size:12.5px;line-height:18px;color:#333;">11-10-2019</span>
<span class="t" style="left:568px;top:451.67px;font-size:12.5px;line-height:18px;color:#3c8dbc;">PU0012</span>
<span class="t" style="left:716px;top:451.67px;font-size:12.5px;line-height:18px;color:#333;">Krishna Patil</span>
<span class="t" style="right:346px;top:451.67px;font-size:12.5px;line-height:18px;color:#333;">1131.00</span>
<span class="t" style="right:179px;top:451.67px;font-size:12.5px;line-height:18px;color:#333;">1131.00</span>
<span class="t" style="right:24px;top:451.67px;font-size:12.5px;line-height:18px;color:#333;">0.00</span>
<span class="t" style="left:254px;top:488.67px;font-size:12.5px;line-height:18px;color:#333;">2</span>
<span class="t" style="left:287px;top:488.67px;font-size:12.5px;line-height:18px;color:#3c8dbc;">PR0002</span>
<span class="t" style="left:444px;top:488.67px;font-size:12.5px;line-height:18px;color:#333;">11-10-2019</span>
<span class="t" style="left:568px;top:488.67px;font-size:12.5px;line-height:18px;color:#333;">-NA-</span>
<span class="t" style="left:716px;top:488.67px;font-size:12.5px;line-height:18px;color:#333;">Krishna Patil</span>
<span class="t" style="right:346px;top:488.67px;font-size:12.5px;line-height:18px;color:#333;">1100.00</span>
<span class="t" style="right:179px;top:488.67px;font-size:12.5px;line-height:18px;color:#333;">500.00</span>
<span class="t" style="right:24px;top:488.67px;font-size:12.5px;line-height:18px;color:#333;">600.00</span>
<span class="t" style="left:254px;top:525.67px;font-size:12.5px;line-height:18px;color:#333;">3</span>
<span class="t" style="left:287px;top:525.67px;font-size:12.5px;line-height:18px;color:#3c8dbc;">PR0003</span>
<span class="t" style="left:444px;top:525.67px;font-size:12.5px;line-height:18px;color:#333;">11-10-2019</span>
<span class="t" style="left:568px;top:525.67px;font-size:12.5px;line-height:18px;color:#333;">-NA-</span>
<span class="t" style="left:716px;top:525.67px;font-size:12.5px;line-height:18px;color:#333;">Krishna Patil</span>
<span class="t" style="right:346px;top:525.67px;font-size:12.5px;line-height:18px;color:#333;">1100.00</span>
<span class="t" style="right:179px;top:525.67px;font-size:12.5px;line-height:18px;color:#333;">0.00</span>
<span class="t" style="right:24px;top:525.67px;font-size:12.5px;line-height:18px;color:#333;">1100.00</span>
<span class="t" style="left:254px;top:562.67px;font-size:12.5px;line-height:18px;color:#333;">4</span>
<span class="t" style="left:287px;top:562.67px;font-size:12.5px;line-height:18px;color:#3c8dbc;">PR0004</span>
<span class="t" style="left:444px;top:562.67px;font-size:12.5px;line-height:18px;color:#333;">11-10-2019</span>
<span class="t" style="left:568px;top:562.67px;font-size:12.5px;line-height:18px;color:#333;">-NA-</span>
<span class="t" style="left:716px;top:562.67px;font-size:12.5px;line-height:18px;color:#333;">Walter Scott</span>
<span class="t" style="right:346px;top:562.67px;font-size:12.5px;line-height:18px;color:#333;">1100.00</span>
<span class="t" style="right:179px;top:562.67px;font-size:12.5px;line-height:18px;color:#333;">0.00</span>
<span class="t" style="right:24px;top:562.67px;font-size:12.5px;line-height:18px;color:#333;">1100.00</span>
<span class="t" style="left:254px;top:599.67px;font-size:12.5px;line-height:18px;color:#333;">5</span>
<span class="t" style="left:287px;top:599.67px;font-size:12.5px;line-height:18px;color:#3c8dbc;">PR0005</span>
<span class="t" style="left:444px;top:599.67px;font-size:12.5px;line-height:18px;color:#333;">11-10-2019</span>
<span class="t" style="left:568px;top:599.67px;font-size:12.5px;line-height:18px;color:#333;">-NA-</span>
<span class="t" style="left:716px;top:599.67px;font-size:12.5px;line-height:18px;color:#333;">Glenn M</span>
<span class="t" style="right:346px;top:599.67px;font-size:12.5px;line-height:18px;color:#333;">1100.00</span>
<span class="t" style="right:179px;top:599.67px;font-size:12.5px;line-height:18px;color:#333;">0.00</span>
<span class="t" style="right:24px;top:599.67px;font-size:12.5px;line-height:18px;color:#333;">1100.00</span>
<span class="t" style="left:254px;top:636.67px;font-size:12.5px;line-height:18px;color:#333;">6</span>
<span class="t" style="left:287px;top:636.67px;font-size:12.5px;line-height:18px;color:#3c8dbc;">PR0006</span>
<span class="t" style="left:444px;top:636.67px;font-size:12.5px;line-height:18px;color:#333;">11-10-2019</span>
<span class="t" style="left:568px;top:636.67px;font-size:12.5px;line-height:18px;color:#3c8dbc;">PU0015</span>
<span class="t" style="left:716px;top:636.67px;font-size:12.5px;line-height:18px;color:#333;">Subhramaniam</span>
<span class="t" style="right:346px;top:636.67px;font-size:12.5px;line-height:18px;color:#333;">3300.00</span>
<span class="t" style="right:179px;top:636.67px;font-size:12.5px;line-height:18px;color:#333;">3300.00</span>
<span class="t" style="right:24px;top:636.67px;font-size:12.5px;line-height:18px;color:#333;">0.00</span>
<span class="t" style="right:502px;top:673.50px;font-size:13px;line-height:18px;font-weight:bold;">Total :</span>
<span class="t" style="right:346px;top:673.67px;font-size:12.5px;line-height:18px;font-weight:bold;">8831.00</span>
<span class="t" style="right:179px;top:673.67px;font-size:12.5px;line-height:18px;font-weight:bold;">4931.00</span>
<span class="t" style="right:24px;top:673.67px;font-size:12.5px;line-height:18px;font-weight:bold;">3900.00</span>
<div class="abs" style="left:230px;top:1017px;width:1119px;height:51px;background:#fff;border-top:1px solid #d2d6de"></div>
<span class="t" style="left:245.5px;top:1034.55px;font-size:12.85px;line-height:18px;color:#444;font-weight:bold;">Copyright &#169; 2019 All rights reserved.</span>
<span class="t" style="right:15px;top:1034.50px;font-size:13px;line-height:18px;color:#444;font-weight:bold;">Ultimate Inventory with POS -v1.5</span>
</body></html>
